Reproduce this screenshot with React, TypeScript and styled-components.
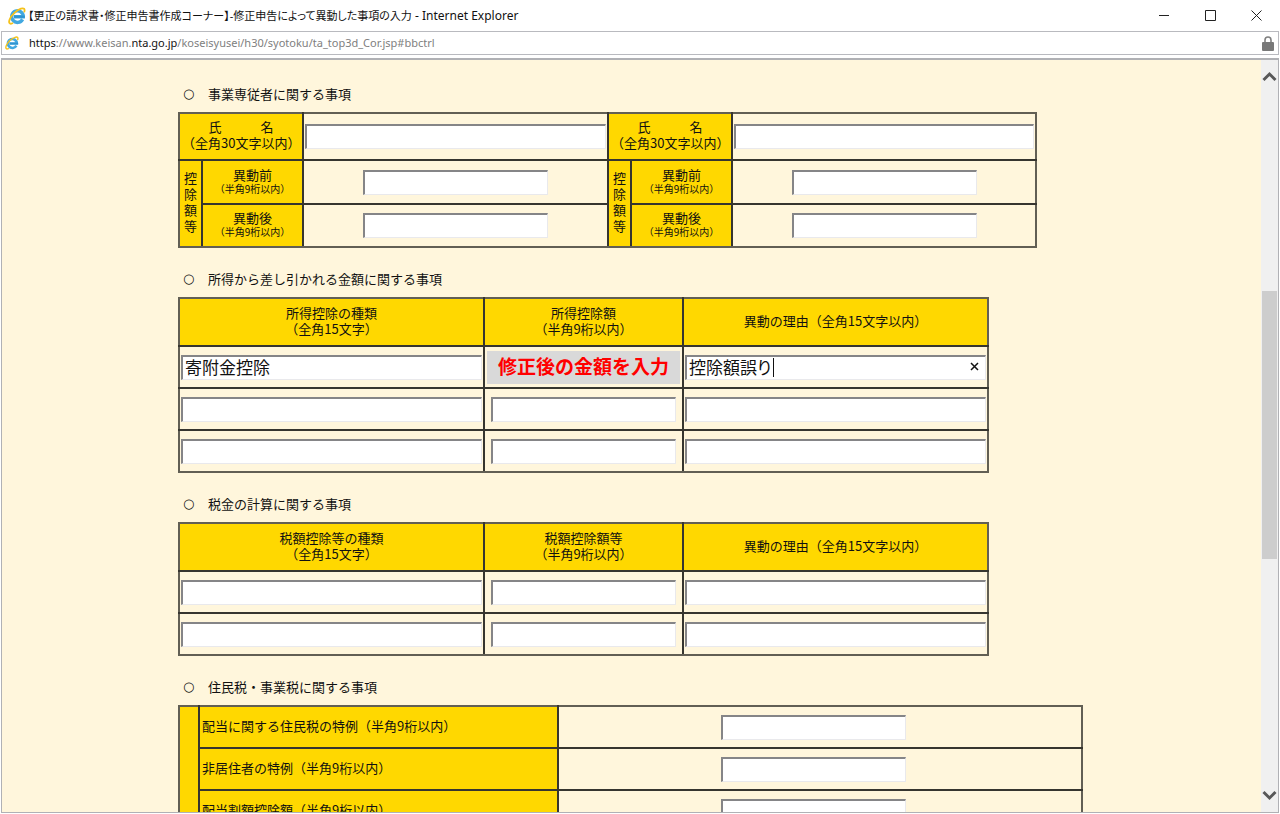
import React, { useState } from "react";
import styled, { createGlobalStyle } from "styled-components";

const LINE = "#36352f";
const EDGE = "#625f54";
const GOLD = "#ffd800";
const CREAM = "#fff6dc";
const FIELD_FONT = 17;

const GlobalStyle = createGlobalStyle`
  *, *::before, *::after { box-sizing: border-box; }
  body {
    margin: 0;
    background: #fff;
    color: #111;
    font-family: "Noto Sans CJK JP", sans-serif;
    font-size: 13px;
    line-height: 16px;
  }
  button { border: 0; padding: 0; background: none; font: inherit; color: inherit; }
`;

const Window = styled.div`
  display: flex;
  flex-direction: column;
  height: 100vh;
  padding: 0 1px 1px;
  overflow: hidden;
`;

const TitleBar = styled.header`
  display: flex;
  align-items: center;
  flex: none;
  height: 31px;
  padding-left: 7px;
`;

const Title = styled.h1`
  flex: 1;
  margin: 0;
  padding-left: 2px;
  font-family: "Noto Sans", "Noto Sans CJK JP", sans-serif;
  font-size: 11px;
  font-weight: 400;
  font-feature-settings: "palt";
  white-space: nowrap;
`;

const AppName = styled.span`
  font-size: 12px;
`;

const WindowButton = styled.button`
  display: grid;
  place-items: center;
  width: 46px;
  height: 31px;
`;

const AddressBar = styled.div`
  display: flex;
  align-items: center;
  flex: none;
  height: 24px;
  padding: 0 4px 0 3px;
  border: 1px solid #b9babf;
`;

const Url = styled.p`
  flex: 1;
  margin: 0;
  padding-left: 10px;
  color: #808080;
  font-family: "Noto Sans", sans-serif;
  font-size: 11px;
  white-space: nowrap;
`;

const Strong = styled.span`
  color: #111;
`;

const Viewport = styled.div`
  display: flex;
  flex: 1;
  min-height: 0;
  margin-top: 3px;
  border: 1px solid #b0b1b5;
  border-top-width: 2px;
  overflow: hidden;
`;

const Page = styled.main`
  flex: 1;
  min-width: 0;
  padding: 26px 18px 0 16px;
  overflow: hidden;
  background: ${CREAM};
`;

const Content = styled.form`
  max-width: 905px;
  margin: 0 auto;
`;

const Section = styled.section`
  margin-bottom: 23px;
`;

const Heading = styled.h2`
  display: flex;
  align-items: center;
  height: 16px;
  margin: 0 0 10px;
  padding-left: 5px;
  font-size: 13px;
  font-weight: 400;
`;

const Circle = styled.span`
  width: 25px;
  font-family: "DejaVu Sans", sans-serif;
`;

const Table = styled.table<{ $width: number }>`
  width: ${(p) => p.$width}px;
  max-width: 100%;
  table-layout: fixed;
  border-collapse: collapse;
  border: 2px solid ${EDGE};

  colgroup + * > tr:first-child > * { border-top-color: ${EDGE}; }
  tbody:last-child > tr:last-child > *,
  th[rowspan] { border-bottom-color: ${EDGE}; }
  tr > :first-child { border-left-color: ${EDGE}; }
  tr > :last-child { border-right-color: ${EDGE}; }
`;

const Row = styled.tr<{ $height: number }>`
  height: ${(p) => p.$height}px;
`;

const Th = styled.th<{ $align?: string }>`
  padding: 0 2px 3px;
  border: 2px solid ${LINE};
  background: ${GOLD};
  font-weight: 400;
  text-align: ${(p) => p.$align ?? "center"};
`;

const Td = styled.td<{ $end?: number }>`
  padding: 0 ${(p) => p.$end ?? 1}px 0 1px;
  border: 2px solid ${LINE};
  text-align: center;
`;

const Small = styled.small`
  display: block;
  font-size: 10px;
  line-height: 12px;
`;

const Field = styled.span<{ $width?: number }>`
  position: relative;
  display: block;
  width: ${(p) => (p.$width ? `${p.$width}px` : "100%")};
  margin: 0 auto;
`;

const Input = styled.input<{ $drawnCaret?: boolean }>`
  display: block;
  width: 100%;
  height: 25px;
  padding: 0 2px 3px;
  border: 2px solid #858587;
  border-right: 1px solid #e9e9ec;
  border-bottom: 1px solid #e9e9ec;
  outline: 0;
  background: #fff;
  color: #111;
  font: ${FIELD_FONT}px "Noto Sans CJK JP", sans-serif;
  font-feature-settings: "palt";
  ${(p) => p.$drawnCaret && "caret-color: transparent;"}
`;

const Caret = styled.span`
  position: absolute;
  top: 3px;
  width: 1px;
  height: 19px;
  background: #111;
`;

const ClearButton = styled.button`
  position: absolute;
  top: 2px;
  right: 3px;
  display: grid;
  place-items: center;
  width: 18px;
  height: 20px;
`;

const Notice = styled.strong`
  display: block;
  margin: 0 1px;
  height: 33px;
  background: #d9d9d9;
  color: #f00;
  font-size: 19px;
  font-weight: 700;
  line-height: 29px;
  white-space: nowrap;
`;

const ScrollBar = styled.div`
  display: flex;
  flex-direction: column;
  flex: none;
  width: 17px;
  background: #f0f0f0;
`;

const ScrollButton = styled.button`
  display: grid;
  place-items: center;
  flex: none;
  height: 34px;
`;

const Track = styled.div`
  display: grid;
  grid-template-rows: 197fr 268fr 219fr;
  flex: 1;
`;

const Thumb = styled.div`
  grid-row: 2;
  margin: 0 1px;
  background: #cdcdcd;
`;

function BrowserIcon({ size }: { size: number }) {
  return (
    <svg width={size} height={size} viewBox="0 0 18 18" aria-hidden="true">
      <path
        d="M14.6 12.4A5.800 5.800 0 1 1 15.300 9.700H6"
        fill="none"
        stroke="#42a8e0"
        strokeWidth="3.400"
      />
      <path d="M6 9.700H16.800" stroke="#2f93d0" strokeWidth="2.200" />
      <path
        d="M4.400 16.300C1.500 17.600.3 15.600 1.700 12.300 3.600 7.900 8.700 3.200 12.900 1.700c3-1.100 4.300.3 3.400 3"
        fill="none"
        stroke="#f5c21b"
        strokeWidth="1.800"
        strokeLinecap="round"
      />
    </svg>
  );
}

function Chevron({ down }: { down?: boolean }) {
  return (
    <svg width="15" height="12" viewBox="0 0 15 12" aria-hidden="true">
      <path
        d={down ? "M1.500 3 7.500 9 13.500 3" : "M1.500 9 7.500 3 13.500 9"}
        fill="none"
        stroke="#585858"
        strokeWidth="3"
      />
    </svg>
  );
}

function TextField(props: { label: string; width?: number; value?: string; active?: boolean }) {
  const [text, setText] = useState(props.value ?? "");
  return (
    <Field $width={props.width}>
      <Input
        type="text"
        aria-label={props.label}
        value={text}
        $drawnCaret={props.active}
        onChange={(e) => setText(e.target.value)}
      />
      {props.active && (
        <>
          <Caret style={{ left: 3 + text.length * FIELD_FONT }} />
          <ClearButton type="button" aria-label="クリア" onClick={() => setText("")}>
            <svg width="9" height="9" viewBox="0 0 9 9" aria-hidden="true">
              <path d="M1 1 8 8M8 1 1 8" stroke="#111" strokeWidth="1.500" />
            </svg>
          </ClearButton>
        </>
      )}
    </Field>
  );
}

function SectionTitle({ children }: { children: string }) {
  return (
    <Heading>
      <Circle>○</Circle>
      {children}
    </Heading>
  );
}

function NameHeader() {
  return (
    <Th colSpan={2} scope="row">
      氏　　　名
      <br />
      （全角30文字以内）
    </Th>
  );
}

function AmountHeader({ children }: { children: string }) {
  return (
    <Th scope="row">
      {children}
      <Small>（半角9桁以内）</Small>
    </Th>
  );
}

function GroupHeader() {
  return (
    <Th rowSpan={2} scope="rowgroup">
      控除額等
    </Th>
  );
}

interface Entry {
  kind?: string;
  notice?: string;
  reason?: string;
}

function ChangeTable(props: { kind: string; amount: string; entries: Entry[] }) {
  return (
    <Table $width={811}>
      <colgroup>
        <col style={{ width: 305 }} />
        <col style={{ width: 199 }} />
        <col />
      </colgroup>
      <thead>
        <Row $height={48}>
          <Th scope="col">
            {props.kind}
            <br />
            （全角15文字）
          </Th>
          <Th scope="col">
            {props.amount}
            <br />
            （半角9桁以内）
          </Th>
          <Th scope="col">異動の理由（全角15文字以内）</Th>
        </Row>
      </thead>
      <tbody>
        {props.entries.map((entry, i) => (
          <Row $height={42} key={i}>
            <Td>
              <TextField label={props.kind} value={entry.kind} />
            </Td>
            <Td>
              {entry.notice ? (
                <Notice>{entry.notice}</Notice>
              ) : (
                <TextField label={props.amount} width={185} />
              )}
            </Td>
            <Td>
              <TextField label="異動の理由" value={entry.reason} active={!!entry.reason} />
            </Td>
          </Row>
        ))}
      </tbody>
    </Table>
  );
}

const LOCAL_TAX_ROWS = ["配当に関する住民税の特例", "非居住者の特例", "配当割額控除額"];

export default function App() {
  return (
    <Window>
      <GlobalStyle />
      <TitleBar>
        <BrowserIcon size={18} />
        <Title>
          【更正の請求書・修正申告書作成コーナー】-修正申告によって異動した事項の入力
          <AppName> - Internet Explorer</AppName>
        </Title>
        <WindowButton type="button" aria-label="最小化">
          <svg width="11" height="11" viewBox="0 0 11 11">
            <path d="M0 5.500H10" stroke="#222" />
          </svg>
        </WindowButton>
        <WindowButton type="button" aria-label="最大化">
          <svg width="11" height="11" viewBox="0 0 11 11">
            <path d="M.5.5H10.500V10.500H.5Z" fill="none" stroke="#222" />
          </svg>
        </WindowButton>
        <WindowButton type="button" aria-label="閉じる">
          <svg width="11" height="11" viewBox="0 0 11 11">
            <path d="M.5.5 10.500 10.500M10.500.5.5 10.500" stroke="#222" />
          </svg>
        </WindowButton>
      </TitleBar>
      <AddressBar>
        <BrowserIcon size={14} />
        <Url>
          <Strong>https</Strong>://www.keisan.<Strong>nta.go.jp</Strong>
          /koseisyusei/h30/syotoku/ta_top3d_Cor.jsp#bbctrl
        </Url>
        <svg width="12" height="15" viewBox="0 0 12 15" aria-hidden="true">
          <path d="M3 7V4a3 3 0 0 1 6 0v3" fill="none" stroke="#808080" strokeWidth="1.600" />
          <rect y="6" width="12" height="9" rx="1" fill="#787878" />
        </svg>
      </AddressBar>
      <Viewport>
        <Page>
          <Content>
            <Section>
              <SectionTitle>事業専従者に関する事項</SectionTitle>
              <Table $width={859}>
                <colgroup>
                  <col style={{ width: 23 }} />
                  <col style={{ width: 101 }} />
                  <col style={{ width: 305 }} />
                  <col style={{ width: 23 }} />
                  <col style={{ width: 101 }} />
                  <col />
                </colgroup>
                <tbody>
                  <Row $height={47}>
                    <NameHeader />
                    <Td>
                      <TextField label="氏名 1" />
                    </Td>
                    <NameHeader />
                    <Td>
                      <TextField label="氏名 2" />
                    </Td>
                  </Row>
                  <Row $height={44}>
                    <GroupHeader />
                    <AmountHeader>異動前</AmountHeader>
                    <Td>
                      <TextField label="異動前 1" width={185} />
                    </Td>
                    <GroupHeader />
                    <AmountHeader>異動前</AmountHeader>
                    <Td>
                      <TextField label="異動前 2" width={185} />
                    </Td>
                  </Row>
                  <Row $height={43}>
                    <AmountHeader>異動後</AmountHeader>
                    <Td>
                      <TextField label="異動後 1" width={185} />
                    </Td>
                    <AmountHeader>異動後</AmountHeader>
                    <Td>
                      <TextField label="異動後 2" width={185} />
                    </Td>
                  </Row>
                </tbody>
              </Table>
            </Section>
            <Section>
              <SectionTitle>所得から差し引かれる金額に関する事項</SectionTitle>
              <ChangeTable
                kind="所得控除の種類"
                amount="所得控除額"
                entries={[
                  { kind: "寄附金控除", notice: "修正後の金額を入力", reason: "控除額誤り" },
                  {},
                  {},
                ]}
              />
            </Section>
            <Section>
              <SectionTitle>税金の計算に関する事項</SectionTitle>
              <ChangeTable kind="税額控除等の種類" amount="税額控除額等" entries={[{}, {}]} />
            </Section>
            <Section>
              <SectionTitle>住民税・事業税に関する事項</SectionTitle>
              <Table $width={905}>
                <colgroup>
                  <col style={{ width: 20 }} />
                  <col style={{ width: 359 }} />
                  <col />
                </colgroup>
                <tbody>
                  {LOCAL_TAX_ROWS.map((label, i) => (
                    <Row $height={42} key={label}>
                      {i === 0 && <Th rowSpan={LOCAL_TAX_ROWS.length} />}
                      <Th scope="row" $align="left">
                        {label}（半角9桁以内）
                      </Th>
                      <Td $end={14}>
                        <TextField label={label} width={185} />
                      </Td>
                    </Row>
                  ))}
                </tbody>
              </Table>
            </Section>
          </Content>
        </Page>
        <ScrollBar>
          <ScrollButton type="button" aria-label="上へスクロール">
            <Chevron />
          </ScrollButton>
          <Track>
            <Thumb />
          </Track>
          <ScrollButton type="button" aria-label="下へスクロール">
            <Chevron down />
          </ScrollButton>
        </ScrollBar>
      </Viewport>
    </Window>
  );
}
